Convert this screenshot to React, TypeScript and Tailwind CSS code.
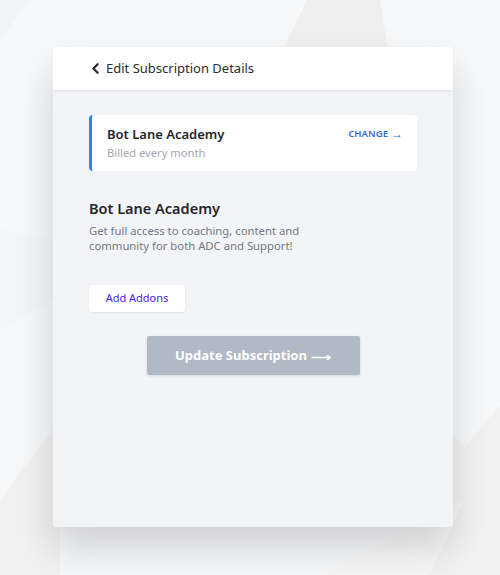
import React from "react";
import { ChevronLeft } from "lucide-react";

export default function App() {
  return (
    <div className="relative w-[500px] h-[575px] overflow-hidden bg-[#f7f8fa]" style={{ fontFamily: "'Noto Sans', 'Open Sans', sans-serif" }}>
      {/* faint background polygons */}
      <svg className="absolute inset-0" width="500" height="575" viewBox="0 0 500 575">
        <polygon points="283,50 307,0 380,0 388,50" fill="#efefef" />
        <polygon points="0,500 60,420 60,575 0,575" fill="#f1f1f1" />
        <polygon points="0,0 30,0 0,40" fill="#f3f4f6" />
        <polygon points="450,430 464,448 500,405 500,575 425,575" fill="#f2f2f2" />
        <polygon points="325,575 464,500 430,575" fill="#f7f7f8" />
        <polygon points="0,230 53,240 53,300 0,330" fill="#f4f5f7" />
      </svg>

      <div className="relative mt-[47px] ml-[53px] w-[400px] h-[480px] rounded-[4px] bg-[#f3f4f8] shadow-[0_22px_40px_rgba(0,0,0,0.16)] overflow-hidden flex flex-col">
        {/* header */}
        <div className="h-[44px] bg-white border-b border-[#e4e6eb] shadow-[0_1px_2px_rgba(0,0,0,0.05)] flex items-center pl-[34px] gap-[2px] text-[13px] text-[#2a2d35]">
          <ChevronLeft size={17} strokeWidth={3.2} className="text-[#2a2d35] -mt-[1px]" />
          <span>Edit Subscription Details</span>
        </div>

        <div className="flex flex-col px-[36px] pt-[24px]">
          {/* plan card */}
          <div className="h-[56px] bg-white rounded-[4px] border-l-[3px] border-[#2f80f5] flex justify-between pl-[15px] pr-[14px] pt-[9px]">
            <div className="flex flex-col">
              <span className="text-[13px] font-semibold text-[#24262d] leading-[20px]">Bot Lane Academy</span>
              <span className="text-[11.2px] text-[#a3a7b0] leading-[18px]">Billed every month</span>
            </div>
            <span className="flex items-center gap-[3px] h-[20px] text-[9.6px] font-semibold text-[#2f6fd1]">
              CHANGE <span className="text-[12px] leading-none">→</span>
            </span>
          </div>

          {/* plan detail */}
          <h2 className="mt-[26px] text-[14.5px] font-semibold text-[#24262d] leading-[22px]">Bot Lane Academy</h2>
          <p className="mt-[4px] w-[230px] text-[11.3px] text-[#737885] leading-[15px]">
            Get full access to coaching, content and community for both ADC and Support!
          </p>

          <button className="mt-[32px] w-[96px] h-[27px] bg-white rounded-[3px] shadow-[0_1px_2px_rgba(0,0,0,0.08)] text-[11px] text-[#4b22f2]">
            Add Addons
          </button>

          <div className="flex justify-center mt-[24px]">
            <button className="w-[213px] h-[39px] bg-[#b0b9c5] rounded-[2px] shadow-[0_1px_3px_rgba(0,0,0,0.12)] text-white font-bold text-[13px] flex items-center justify-center gap-[4px]">
              <span>Update Subscription</span>
              <span className="text-[14px] -mb-[2px]">⟶</span>
            </button>
          </div>
        </div>
      </div>
    </div>
  );
}
